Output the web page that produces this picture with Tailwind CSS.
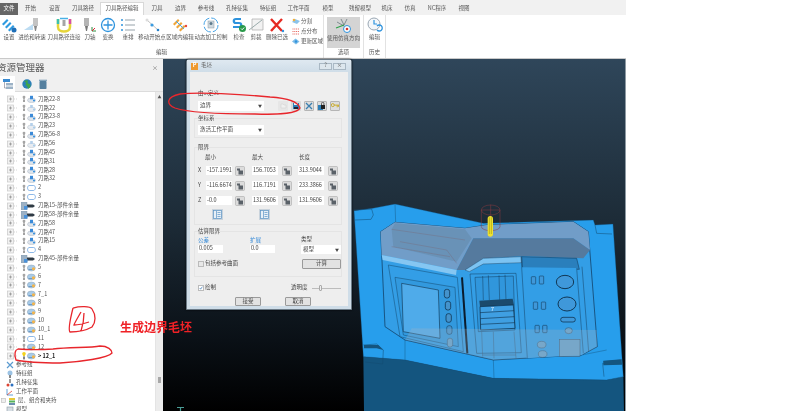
<!DOCTYPE html>
<html lang="zh">
<head>
<meta charset="utf-8">
<title>毛坯</title>
<script src="https://cdn.jsdelivr.net/npm/@tailwindcss/browser@4"></script>
</head>
<body class="bg-white">
<svg class="hidden" width="0" height="0">
  <symbol id="p" viewBox="0 0 10 8"><rect x="0.5" y="1" width="6" height="6" fill="#f2f2f2" stroke="#c8c8c8" stroke-width="0.7"/><path d="M2 4h3M3.5 2.500v3" stroke="#8a8a8a" stroke-width="0.7"/><path d="M7 4h3" stroke="#c4c4c4" stroke-width="0.7" stroke-dasharray="1 1"/></symbol>
  <symbol id="b" viewBox="0 0 6 8"><path d="M1.600 2a1.400 1.300 0 1 1 2.800 0c0 .8-.6 1-.7 2H2.300C2.200 3 1.600 2.800 1.600 2z" fill="#a5a5a5"/><rect x="2.400" y="4.400" width="1.200" height="2.600" fill="#666"/></symbol>
  <symbol id="y" viewBox="0 0 6 8"><path d="M1.200 1.500a1.800 1.500 0 1 1 3.600 0c0 1-.8 1.200-.9 2.500H2.100C2 2.700 1.200 2.500 1.200 1.500z" fill="#f2d21f"/><rect x="2.200" y="4.400" width="1.600" height="3" fill="#666"/></symbol>
  <symbol id="t" viewBox="0 0 9 8"><ellipse cx="4.500" cy="5.300" rx="4" ry="2.300" fill="#dfe5ec" stroke="#aab5c2" stroke-width="0.5"/><path d="M3 .8h3v3.500H3z" fill="#3b8ad8"/><circle cx="7" cy="5.500" r="1" fill="#2a8ce0"/></symbol>
  <symbol id="l" viewBox="0 0 9 8"><ellipse cx="4.500" cy="5.300" rx="4" ry="2.300" fill="#e8ecf1" stroke="#b5c0cb" stroke-width="0.5"/><path d="M3.200 1h2.600v3H3.200z" fill="#b4d0ea"/><circle cx="7" cy="5.500" r=".9" fill="#9cc7ea"/></symbol>
  <symbol id="r" viewBox="0 0 9 8"><path d="M2 1.500h4.500c2.500 0 2.500 4.500 0 5H2.500C0 6.500 0 2 2 1.500z" fill="#fff" stroke="#5a9ade" stroke-width="0.700"/></symbol>
  <symbol id="o" viewBox="0 0 9 8"><ellipse cx="4.300" cy="4" rx="4" ry="3" fill="#a8cbe8" stroke="#8fa5b8" stroke-width="0.5"/><path d="M1.500 5.500h6" stroke="#6b9ac8" stroke-width="1"/><circle cx="6.500" cy="4.800" r="1.600" fill="#f3b54d"/></symbol>
  <symbol id="s" viewBox="0 0 15 8"><rect x="0" y="0" width="6" height="8" fill="#9db2c6" stroke="#7b8fa2" stroke-width="0.4"/><path d="M6 2.500h6l2 1.500-2 1.500H6z" fill="#2e3a44"/><rect x="3" y="4" width="3.500" height="3.500" fill="#4a92da"/></symbol>
  <symbol id="m" viewBox="0 0 10 10"><rect x="0.500" y="0.500" width="9" height="9" rx="1" fill="#dcdcdc" stroke="#a8a8a8" stroke-width=".6"/><path d="M2 2.500h3v2h3v4H3.500V4.500H2z" fill="#5a6168"/></symbol>
</svg>

<div class="flex h-[411px] w-[800px] overflow-hidden bg-white font-['Noto_Sans_CJK_SC',sans-serif] text-[5.5px] leading-none text-[#444] blur-[0.3px]">
  <div class="flex h-full w-[626px] flex-col">

    <!-- tabs -->
    <div class="flex h-[15px] shrink-0 items-end bg-[#f1f1f1] text-[#555]">
      <div class="flex h-[12px] w-[18px] items-center justify-center bg-[#666] text-white">文件</div>
      <div class="flex h-[15px] w-[25px] items-center justify-center pt-[2px]">开始</div>
      <div class="flex h-[15px] w-[23px] items-center justify-center pt-[2px]">设置</div>
      <div class="flex h-[15px] w-[34px] items-center justify-center pt-[2px]">刀具路径</div>
      <div class="flex h-[13px] w-[44px] items-center justify-center border-x border-t border-[#d8d8d8] bg-white">刀具路径编辑</div>
      <div class="flex h-[15px] w-[26px] items-center justify-center pt-[2px]">刀具</div>
      <div class="flex h-[15px] w-[21px] items-center justify-center pt-[2px]">边界</div>
      <div class="flex h-[15px] w-[30px] items-center justify-center pt-[2px]">参考线</div>
      <div class="flex h-[15px] w-[32px] items-center justify-center pt-[2px]">孔特征集</div>
      <div class="flex h-[15px] w-[30px] items-center justify-center pt-[2px]">特征组</div>
      <div class="flex h-[15px] w-[31px] items-center justify-center pt-[2px]">工作平面</div>
      <div class="flex h-[15px] w-[28px] items-center justify-center pt-[2px]">模型</div>
      <div class="flex h-[15px] w-[36px] items-center justify-center pt-[2px]">残留模型</div>
      <div class="flex h-[15px] w-[18px] items-center justify-center pt-[2px]">机床</div>
      <div class="flex h-[15px] w-[28px] items-center justify-center pt-[2px]">仿真</div>
      <div class="flex h-[15px] w-[26px] items-center justify-center pt-[2px]">NC程序</div>
      <div class="flex h-[15px] w-[28px] items-center justify-center pt-[2px]">视图</div>
    </div>

    <!-- ribbon -->
    <div class="flex h-[44px] shrink-0 border-b border-[#c9c9c9] bg-white text-[#555]">
      <div class="flex w-[324px] flex-col border-r border-[#e2e2e2]">
        <div class="flex h-[33px]">
          <div class="flex w-[18px] flex-col items-center gap-[2px] whitespace-nowrap pt-[2px]">
            <svg class="h-[16px] w-[16px]" viewBox="0 0 16 16"><path d="M1 7l5-5 1.500 1.500-5 5zM4 10l5-5 1.500 1.500-5 5zM7 13l5-5 1.500 1.500-5 5z" fill="#2e9ae0"/><circle cx="13" cy="13" r="2.500" fill="#1f6fb8"/></svg>
            <span>设置</span>
          </div>
          <div class="flex w-[28px] flex-col items-center gap-[2px] whitespace-nowrap pt-[2px]">
            <svg class="h-[16px] w-[18px]" viewBox="0 0 18 16"><path d="M1 13l9-6v6z" fill="#bcdcf2"/><rect x="10" y="1" width="5" height="8" fill="#c4c4c4"/><path d="M11 9h3l-1 5h-1z" fill="#888"/></svg>
            <span>进给和转速</span>
          </div>
          <div class="flex w-[36px] flex-col items-center gap-[2px] whitespace-nowrap pt-[2px]">
            <svg class="h-[16px] w-[18px]" viewBox="0 0 18 16"><path d="M3 2v8c0 6 12 6 12 0V2" fill="none" stroke="#e6d53a" stroke-width="2.500"/><path d="M3 2v5" stroke="#3cc0b0" stroke-width="2.500"/><path d="M15 2v5" stroke="#d54fa6" stroke-width="2.500"/><path d="M5 1.500h8" stroke="#49b0e6" stroke-width="1.500"/><rect x="7.500" y="3" width="3" height="6" fill="#a5a5a5"/></svg>
            <span>刀具路径连接</span>
          </div>
          <div class="flex w-[16px] flex-col items-center gap-[2px] whitespace-nowrap pt-[2px]">
            <svg class="h-[16px] w-[16px]" viewBox="0 0 16 16"><rect x="2" y="1" width="5" height="8" fill="#b5b5b5"/><path d="M3 9h3l-1 5H4z" fill="#777"/><path d="M10 14v-4M10 14h4" stroke="#2b8c3f" stroke-width="1"/><path d="M10 14l3-3" stroke="#d23" stroke-width="1"/></svg>
            <span>刀轴</span>
          </div>
          <div class="flex w-[20px] flex-col items-center gap-[2px] whitespace-nowrap pt-[2px]">
            <svg class="h-[16px] w-[16px]" viewBox="0 0 16 16"><circle cx="8" cy="8" r="6.500" fill="none" stroke="#2e93dd" stroke-width="1.300"/><path d="M8 3.500v9M3.500 8h9" stroke="#2e93dd" stroke-width="1.300"/></svg>
            <span>变换</span>
          </div>
          <div class="flex w-[20px] flex-col items-center gap-[2px] whitespace-nowrap pt-[2px]">
            <svg class="h-[16px] w-[16px]" viewBox="0 0 16 16"><path d="M5 3h10M5 8h10M5 13h10" stroke="#7c8a96" stroke-width=".8"/><circle cx="2" cy="3" r="1" fill="#2e93dd"/><circle cx="2" cy="8" r="1" fill="#2e93dd"/><circle cx="2" cy="13" r="1" fill="#2e93dd"/></svg>
            <span>重排</span>
          </div>
          <div class="flex w-[28px] flex-col items-center gap-[2px] whitespace-nowrap pt-[2px]">
            <svg class="h-[16px] w-[16px]" viewBox="0 0 16 16"><path d="M3 3l11 10" stroke="#c0c0c0" stroke-width="1"/><circle cx="3" cy="3" r="1.500" fill="#dcdcdc"/><circle cx="8" cy="8" r="1.600" fill="#3a9be0"/><circle cx="14" cy="13" r="1.300" fill="#2680c8"/></svg>
            <span>移动开始点</span>
          </div>
          <div class="flex w-[28px] flex-col items-center gap-[2px] whitespace-nowrap pt-[2px]">
            <svg class="h-[16px] w-[16px]" viewBox="0 0 16 16"><path d="M1 7l5-5 1.500 1.500-5 5zM4 10l5-5 1.500 1.500-5 5zM7 13l5-5 1.500 1.500-5 5z" fill="#f0a63a"/><path d="M4 4l8 8" stroke="#49a9e4" stroke-width="1"/><circle cx="14" cy="9" r="1.200" fill="#e8483f"/></svg>
            <span>区域内编辑</span>
          </div>
          <div class="flex w-[34px] flex-col items-center gap-[2px] whitespace-nowrap pt-[2px]">
            <svg class="h-[16px] w-[16px]" viewBox="0 0 16 16"><circle cx="8" cy="8" r="7" fill="none" stroke="#48a4e6" stroke-width="1" stroke-dasharray="9 2"/><rect x="5" y="4" width="6" height="7" fill="#cfd9df" stroke="#8b9aa5" stroke-width=".5"/><circle cx="8" cy="6.500" r="1.500" fill="#5d7a8c"/></svg>
            <span>动态加工控制</span>
          </div>
          <div class="flex w-[22px] flex-col items-center gap-[2px] whitespace-nowrap pt-[2px]">
            <svg class="h-[16px] w-[16px]" viewBox="0 0 16 16"><path d="M10 2H5C2 2 2 6 5 6h3c3 0 3 4 0 4H2" fill="none" stroke="#2e93dd" stroke-width="2.200"/><circle cx="11.500" cy="11.500" r="3.500" fill="#2a9a4a"/><path d="M10 11.500l1.200 1.200 2-2.200" fill="none" stroke="#fff" stroke-width="1"/></svg>
            <span>检查</span>
          </div>
          <div class="flex w-[12px] flex-col items-center gap-[2px] whitespace-nowrap pt-[2px]">
            <svg class="h-[16px] w-[16px] shrink-0" viewBox="0 0 16 16"><path d="M4 2l11 0 0 11-11 0z" fill="#f2f2f2" stroke="#aaa" stroke-width=".7"/><path d="M1 13L14 3" stroke="#9aa" stroke-width="1"/></svg>
            <span>剪裁</span>
          </div>
          <div class="flex w-[30px] flex-col items-center gap-[2px] whitespace-nowrap pt-[2px]">
            <svg class="h-[16px] w-[16px]" viewBox="0 0 16 16"><path d="M2 2l11 12M13 2L2 14" stroke="#e62a22" stroke-width="2.400"/><circle cx="14" cy="14" r="1.200" fill="#2e93dd"/></svg>
            <span>删除已选</span>
          </div>
          <div class="flex flex-col gap-[3px] whitespace-nowrap pt-[3px]">
            <div class="flex h-[7px] items-center gap-[1px]"><svg class="h-[7px] w-[8px]" viewBox="0 0 8 7"><path d="M0 4l3-3 5 2-3 3z" fill="#8cc3ea"/><circle cx="2" cy="2" r="1.300" fill="#f0b040"/></svg><span>分割</span></div>
            <div class="flex h-[7px] items-center gap-[1px]"><svg class="h-[7px] w-[8px]" viewBox="0 0 8 7"><path d="M.5 1h7M.5 3.500h7M.5 6h7" stroke="#e03a30" stroke-width=".8" stroke-dasharray="1 .8"/></svg><span>点分布</span></div>
            <div class="flex h-[7px] items-center gap-[1px]"><svg class="h-[7px] w-[8px]" viewBox="0 0 8 7"><path d="M0 3.500l3.500-3 4 3-3.500 3z" fill="#7fbde8"/><circle cx="4" cy="3.500" r="1.200" fill="#2e93dd"/></svg><span>更新区域</span></div>
          </div>
        </div>
        <div class="flex h-[10px] items-center justify-center">编辑</div>
      </div>

      <div class="flex w-[40px] flex-col border-r border-[#e2e2e2]">
        <div class="mx-[3px] mt-[2px] flex h-[31px] flex-col items-center gap-[2px] whitespace-nowrap bg-[#d4d4d4] pt-[1px]">
          <svg class="h-[16px] w-[20px]" viewBox="0 0 20 16"><path d="M7 1l3 6M13 1l-3 6M3 4l7 4" stroke="#6b7a80" stroke-width=".8"/><path d="M2 10l8-3" stroke="#2ca14a" stroke-width="1.200"/><circle cx="13" cy="11" r="3.500" fill="#fff" stroke="#2e93dd" stroke-width="1"/><circle cx="13" cy="11" r="1.300" fill="#d8362c"/></svg>
          <span>使用仿真方向</span>
        </div>
        <div class="flex h-[10px] items-center justify-center">选项</div>
      </div>

      <div class="flex w-[22px] flex-col border-r border-[#e2e2e2]">
        <div class="flex h-[33px] flex-col items-center gap-[2px] whitespace-nowrap pt-[2px]">
          <svg class="h-[16px] w-[16px]" viewBox="0 0 16 16"><circle cx="7" cy="7" r="6" fill="#f4f7fa" stroke="#9aa7b3" stroke-width="1"/><path d="M7 3v4h3" stroke="#2e93dd" stroke-width="1.200" fill="none"/><path d="M10 13a3 3 0 1 0 0-4" fill="none" stroke="#2e93dd" stroke-width="1.300"/></svg>
          <span>编辑</span>
        </div>
        <div class="flex h-[10px] items-center justify-center">历史</div>
      </div>
    </div>

    <!-- main -->
    <div class="flex min-h-0 flex-1">
      <!-- explorer -->
      <div class="flex w-[163px] shrink-0 flex-col bg-[#f0f0f0]">
        <div class="flex h-[17px] shrink-0 items-center justify-between overflow-hidden pr-[5px] text-[9.500px] text-[#555]">
          <span class="-ml-[3px] whitespace-nowrap">资源管理器</span>
          <span class="text-[6px] text-[#777]">×</span>
        </div>
        <div class="flex h-[16px] shrink-0 items-center gap-[7px] border-b border-[#dcdcdc]">
          <div class="flex h-[16px] w-[15px] items-center justify-center bg-white">
            <svg class="h-[10px] w-[10px]" viewBox="0 0 10 10"><rect x="0" y="0" width="7" height="3" fill="#3a8ad0"/><rect x="3" y="4" width="7" height="2.500" fill="#9cb2c6"/><rect x="3" y="7.500" width="7" height="2.500" fill="#9cb2c6"/><path d="M1.500 3v6H3" fill="none" stroke="#778" stroke-width=".6"/></svg>
          </div>
          <svg class="h-[10px] w-[10px]" viewBox="0 0 10 10"><circle cx="5" cy="5" r="4.700" fill="#2b7fb8"/><path d="M2 2c2 1 3 3 1 4 2 0 3 3 3 4 2-1 3-3 2-5-2 0-3-1-2-4z" fill="#3fa34d"/></svg>
          <svg class="h-[10px] w-[8px]" viewBox="0 0 8 10"><rect x=".5" y="2" width="7" height="8" rx=".8" fill="#55809f"/><rect x="0" y=".7" width="8" height="1.200" fill="#7da0b8"/></svg>
        </div>
        <div class="flex min-h-0 flex-1">
          <div class="w-[155px] shrink-0 overflow-hidden bg-white pt-[3px] text-[#505050]">
            <div class="flex h-[8.870px] items-center whitespace-nowrap"><svg class="ml-[7px] h-[8px] w-[10px]"><use href="#p"/></svg><svg class="ml-[4px] h-[8px] w-[6px]"><use href="#b"/></svg><svg class="h-[8px] w-[9px]"><use href="#t"/></svg><span class="ml-[2px]">刀路22-8</span></div>
            <div class="flex h-[8.870px] items-center whitespace-nowrap"><svg class="ml-[7px] h-[8px] w-[10px]"><use href="#p"/></svg><svg class="ml-[4px] h-[8px] w-[6px]"><use href="#b"/></svg><svg class="h-[8px] w-[9px]"><use href="#l"/></svg><span class="ml-[2px]">刀路22</span></div>
            <div class="flex h-[8.870px] items-center whitespace-nowrap"><svg class="ml-[7px] h-[8px] w-[10px]"><use href="#p"/></svg><svg class="ml-[4px] h-[8px] w-[6px]"><use href="#b"/></svg><svg class="h-[8px] w-[9px]"><use href="#t"/></svg><span class="ml-[2px]">刀路23-8</span></div>
            <div class="flex h-[8.870px] items-center whitespace-nowrap"><svg class="ml-[7px] h-[8px] w-[10px]"><use href="#p"/></svg><svg class="ml-[4px] h-[8px] w-[6px]"><use href="#b"/></svg><svg class="h-[8px] w-[9px]"><use href="#l"/></svg><span class="ml-[2px]">刀路23</span></div>
            <div class="flex h-[8.870px] items-center whitespace-nowrap"><svg class="ml-[7px] h-[8px] w-[10px]"><use href="#p"/></svg><svg class="ml-[4px] h-[8px] w-[6px]"><use href="#b"/></svg><svg class="h-[8px] w-[9px]"><use href="#t"/></svg><span class="ml-[2px]">刀路56-8</span></div>
            <div class="flex h-[8.870px] items-center whitespace-nowrap"><svg class="ml-[7px] h-[8px] w-[10px]"><use href="#p"/></svg><svg class="ml-[4px] h-[8px] w-[6px]"><use href="#b"/></svg><svg class="h-[8px] w-[9px]"><use href="#l"/></svg><span class="ml-[2px]">刀路56</span></div>
            <div class="flex h-[8.870px] items-center whitespace-nowrap"><svg class="ml-[7px] h-[8px] w-[10px]"><use href="#p"/></svg><svg class="ml-[4px] h-[8px] w-[6px]"><use href="#b"/></svg><svg class="h-[8px] w-[9px]"><use href="#t"/></svg><span class="ml-[2px]">刀路45</span></div>
            <div class="flex h-[8.870px] items-center whitespace-nowrap"><svg class="ml-[7px] h-[8px] w-[10px]"><use href="#p"/></svg><svg class="ml-[4px] h-[8px] w-[6px]"><use href="#b"/></svg><svg class="h-[8px] w-[9px]"><use href="#t"/></svg><span class="ml-[2px]">刀路31</span></div>
            <div class="flex h-[8.870px] items-center whitespace-nowrap"><svg class="ml-[7px] h-[8px] w-[10px]"><use href="#p"/></svg><svg class="ml-[4px] h-[8px] w-[6px]"><use href="#b"/></svg><svg class="h-[8px] w-[9px]"><use href="#t"/></svg><span class="ml-[2px]">刀路28</span></div>
            <div class="flex h-[8.870px] items-center whitespace-nowrap"><svg class="ml-[7px] h-[8px] w-[10px]"><use href="#p"/></svg><svg class="ml-[4px] h-[8px] w-[6px]"><use href="#b"/></svg><svg class="h-[8px] w-[9px]"><use href="#t"/></svg><span class="ml-[2px]">刀路32</span></div>
            <div class="flex h-[8.870px] items-center whitespace-nowrap"><svg class="ml-[7px] h-[8px] w-[10px]"><use href="#p"/></svg><svg class="ml-[4px] h-[8px] w-[6px]"><use href="#b"/></svg><svg class="h-[8px] w-[9px]"><use href="#r"/></svg><span class="ml-[2px]">2</span></div>
            <div class="flex h-[8.870px] items-center whitespace-nowrap"><svg class="ml-[7px] h-[8px] w-[10px]"><use href="#p"/></svg><svg class="ml-[4px] h-[8px] w-[6px]"><use href="#b"/></svg><svg class="h-[8px] w-[9px]"><use href="#r"/></svg><span class="ml-[2px]">3</span></div>
            <div class="flex h-[8.870px] items-center whitespace-nowrap"><svg class="ml-[7px] h-[8px] w-[10px]"><use href="#p"/></svg><svg class="ml-[4px] h-[8px] w-[15px]"><use href="#s"/></svg><span class="ml-[2px]">刀路15-部件余量</span></div>
            <div class="flex h-[8.870px] items-center whitespace-nowrap"><svg class="ml-[7px] h-[8px] w-[10px]"><use href="#p"/></svg><svg class="ml-[4px] h-[8px] w-[15px]"><use href="#s"/></svg><span class="ml-[2px]">刀路58-部件余量</span></div>
            <div class="flex h-[8.870px] items-center whitespace-nowrap"><svg class="ml-[7px] h-[8px] w-[10px]"><use href="#p"/></svg><svg class="ml-[4px] h-[8px] w-[6px]"><use href="#b"/></svg><svg class="h-[8px] w-[9px]"><use href="#t"/></svg><span class="ml-[2px]">刀路58</span></div>
            <div class="flex h-[8.870px] items-center whitespace-nowrap"><svg class="ml-[7px] h-[8px] w-[10px]"><use href="#p"/></svg><svg class="ml-[4px] h-[8px] w-[6px]"><use href="#b"/></svg><svg class="h-[8px] w-[9px]"><use href="#t"/></svg><span class="ml-[2px]">刀路47</span></div>
            <div class="flex h-[8.870px] items-center whitespace-nowrap"><svg class="ml-[7px] h-[8px] w-[10px]"><use href="#p"/></svg><svg class="ml-[4px] h-[8px] w-[6px]"><use href="#b"/></svg><svg class="h-[8px] w-[9px]"><use href="#t"/></svg><span class="ml-[2px]">刀路15</span></div>
            <div class="flex h-[8.870px] items-center whitespace-nowrap"><svg class="ml-[7px] h-[8px] w-[10px]"><use href="#p"/></svg><svg class="ml-[4px] h-[8px] w-[6px]"><use href="#b"/></svg><svg class="h-[8px] w-[9px]"><use href="#r"/></svg><span class="ml-[2px]">4</span></div>
            <div class="flex h-[8.870px] items-center whitespace-nowrap"><svg class="ml-[7px] h-[8px] w-[10px]"><use href="#p"/></svg><svg class="ml-[4px] h-[8px] w-[15px]"><use href="#s"/></svg><span class="ml-[2px]">刀路45-部件余量</span></div>
            <div class="flex h-[8.870px] items-center whitespace-nowrap"><svg class="ml-[7px] h-[8px] w-[10px]"><use href="#p"/></svg><svg class="ml-[4px] h-[8px] w-[6px]"><use href="#b"/></svg><svg class="h-[8px] w-[9px]"><use href="#o"/></svg><span class="ml-[2px]">5</span></div>
            <div class="flex h-[8.870px] items-center whitespace-nowrap"><svg class="ml-[7px] h-[8px] w-[10px]"><use href="#p"/></svg><svg class="ml-[4px] h-[8px] w-[6px]"><use href="#b"/></svg><svg class="h-[8px] w-[9px]"><use href="#o"/></svg><span class="ml-[2px]">6</span></div>
            <div class="flex h-[8.870px] items-center whitespace-nowrap"><svg class="ml-[7px] h-[8px] w-[10px]"><use href="#p"/></svg><svg class="ml-[4px] h-[8px] w-[6px]"><use href="#b"/></svg><svg class="h-[8px] w-[9px]"><use href="#o"/></svg><span class="ml-[2px]">7</span></div>
            <div class="flex h-[8.870px] items-center whitespace-nowrap"><svg class="ml-[7px] h-[8px] w-[10px]"><use href="#p"/></svg><svg class="ml-[4px] h-[8px] w-[6px]"><use href="#b"/></svg><svg class="h-[8px] w-[9px]"><use href="#o"/></svg><span class="ml-[2px]">7_1</span></div>
            <div class="flex h-[8.870px] items-center whitespace-nowrap"><svg class="ml-[7px] h-[8px] w-[10px]"><use href="#p"/></svg><svg class="ml-[4px] h-[8px] w-[6px]"><use href="#b"/></svg><svg class="h-[8px] w-[9px]"><use href="#o"/></svg><span class="ml-[2px]">8</span></div>
            <div class="flex h-[8.870px] items-center whitespace-nowrap"><svg class="ml-[7px] h-[8px] w-[10px]"><use href="#p"/></svg><svg class="ml-[4px] h-[8px] w-[6px]"><use href="#b"/></svg><svg class="h-[8px] w-[9px]"><use href="#o"/></svg><span class="ml-[2px]">9</span></div>
            <div class="flex h-[8.870px] items-center whitespace-nowrap"><svg class="ml-[7px] h-[8px] w-[10px]"><use href="#p"/></svg><svg class="ml-[4px] h-[8px] w-[6px]"><use href="#b"/></svg><svg class="h-[8px] w-[9px]"><use href="#o"/></svg><span class="ml-[2px]">10</span></div>
            <div class="flex h-[8.870px] items-center whitespace-nowrap"><svg class="ml-[7px] h-[8px] w-[10px]"><use href="#p"/></svg><svg class="ml-[4px] h-[8px] w-[6px]"><use href="#b"/></svg><svg class="h-[8px] w-[9px]"><use href="#o"/></svg><span class="ml-[2px]">10_1</span></div>
            <div class="flex h-[8.870px] items-center whitespace-nowrap"><svg class="ml-[7px] h-[8px] w-[10px]"><use href="#p"/></svg><svg class="ml-[4px] h-[8px] w-[6px]"><use href="#b"/></svg><svg class="h-[8px] w-[9px]"><use href="#r"/></svg><span class="ml-[2px]">11</span></div>
            <div class="flex h-[8.870px] items-center whitespace-nowrap"><svg class="ml-[7px] h-[8px] w-[10px]"><use href="#p"/></svg><svg class="ml-[4px] h-[8px] w-[6px]"><use href="#b"/></svg><svg class="h-[8px] w-[9px]"><use href="#o"/></svg><span class="ml-[2px]">12</span></div>
            <div class="flex h-[8.870px] items-center whitespace-nowrap"><svg class="ml-[7px] h-[8px] w-[10px]"><use href="#p"/></svg><svg class="ml-[4px] h-[8px] w-[6px]"><use href="#y"/></svg><svg class="h-[8px] w-[9px]"><use href="#o"/></svg><span class="ml-[2px] font-bold text-[#222]">&gt; 12_1</span></div>
            <div class="flex h-[8.870px] items-center gap-[2px] whitespace-nowrap pl-[6px]"><svg class="h-[8px] w-[8px]" viewBox="0 0 8 8"><path d="M1 1l6 6M7 1L1 7" stroke="#5b9bd0" stroke-width="1.200"/></svg><span>参考线</span></div>
            <div class="flex h-[8.870px] items-center gap-[2px] whitespace-nowrap pl-[6px]"><svg class="h-[8px] w-[8px]" viewBox="0 0 8 8"><circle cx="4" cy="3" r="2.500" fill="#9cc3e4"/><rect x="3" y="5" width="2" height="3" fill="#888"/></svg><span>特征组</span></div>
            <div class="flex h-[8.870px] items-center gap-[2px] whitespace-nowrap pl-[6px]"><svg class="h-[8px] w-[8px]" viewBox="0 0 8 8"><path d="M3 0h2v4H3z" fill="#999"/><circle cx="2" cy="6" r="1.500" fill="#d43"/><circle cx="6" cy="6" r="1.500" fill="#2a6fc0"/></svg><span>孔特征集</span></div>
            <div class="flex h-[8.870px] items-center gap-[2px] whitespace-nowrap pl-[6px]"><svg class="h-[8px] w-[8px]" viewBox="0 0 8 8"><path d="M1 1v6h6" fill="none" stroke="#3a8ad0" stroke-width=".8"/><path d="M1 7l5-4" stroke="#d43" stroke-width=".8"/></svg><span>工作平面</span></div>
            <div class="flex h-[8.870px] items-center gap-[2px] whitespace-nowrap pl-[1px]"><svg class="h-[8px] w-[5px]" viewBox="0 0 5 8"><rect x=".5" y="1.500" width="4" height="4" fill="#eee" stroke="#bbb" stroke-width=".6"/></svg><svg class="h-[8px] w-[8px]" viewBox="0 0 8 8"><rect x="1" y="1" width="6" height="2" fill="#e7c93a"/><rect x="1" y="3.500" width="6" height="2" fill="#58b45a"/><rect x="1" y="6" width="6" height="2" fill="#6d8fb0"/></svg><span>层、组合和夹持</span></div>
            <div class="flex h-[8.870px] items-center gap-[2px] whitespace-nowrap pl-[6px]"><svg class="h-[8px] w-[8px]" viewBox="0 0 8 8"><rect x="1" y="1" width="6" height="6" fill="#d6dde3" stroke="#8b9aa5" stroke-width=".6"/></svg><span>模型</span></div>
          </div>
          <div class="flex w-[8px] flex-col items-center border-l border-[#e4e4e4] bg-[#ececec] text-[#555]">
            <span class="mt-[3px] text-[4px]">▲</span>
            <div class="mt-[278px] h-[6px] w-[3px] bg-[#a8a8a8]"></div>
          </div>
        </div>
      </div>

      <!-- viewport -->
      <div class="relative min-w-0 flex-1 border-r border-[#8e9aa3] bg-[linear-gradient(180deg,#2f465a_0%,#1d2c38_45%,#0a1016_80%,#000_100%)]">
        <svg class="absolute left-[187px] top-[131px] h-[221px] w-[276px]" viewBox="0 0 828 663">
          <polygon points="40,500 165,510 430,565 770,570 820,558 822,663 42,663" fill="#14557f"/>
          <polygon points="12,62 68,55 135,42 400,100 730,90 735,105 789,102 820,560 770,570 430,565 165,510 40,500" fill="#279eec" stroke="#124a70" stroke-width="1"/>
          <path d="M12,60 L65,57 L70,75 L63,88 L15,90 M735,105 L740,130 L786,132 M40,465 L80,462 L100,480 L98,522 L45,516 M760,515 L815,510 M762,560 L758,520 L815,520" fill="none" stroke="#124a70" stroke-width="1.500"/>
          <polygon points="42,465 85,465 100,480 80,475 42,475" fill="#14557f"/>
          <polygon points="760,512 815,508 816,524 760,526" fill="#14557f"/>
          <path d="M135,42 L137,97 M165,450 L165,510 M430,510 L432,565 M695,495 L770,480" stroke="#0f3c5c" stroke-width="1"/>
          <polygon points="92,125 135,97 345,115 410,105 670,95 715,125 742,470 695,495 430,510 165,450 105,410" fill="#339ee6" stroke="#0e3050" stroke-width="2"/>
          <polygon points="92,125 135,97 345,115 410,105 670,95 715,125 720,180 670,145 370,145 320,240 95,195" fill="#719dc8"/>
          <polygon points="125,118 135,100 345,118 365,145 320,215 130,170" fill="#648aac" opacity=".6"/>
          <path d="M125,170 L300,200 M150,155 L290,180 L320,220 M125,118 L345,150" stroke="#7a6570" stroke-width="1" fill="none"/>
          <polygon points="370,145 670,145 720,180 700,205 515,198 400,205 345,240 320,240" fill="#557a9e"/>
          <polygon points="345,240 400,205 515,200 515,218 400,222 358,245" fill="#7cc3f2" stroke="#123" stroke-width="1"/>
          <polygon points="95,195 320,240 318,255 98,210" fill="#85c6f2"/>
          <polygon points="115,225 322,262 340,485 150,440" fill="#339ee6" stroke="#0e3a5c" stroke-width="1.300"/>
          <polygon points="135,262 315,292 325,470 160,435" fill="#3299de" stroke="#0e3a5c" stroke-width="1.300"/>
          <polygon points="155,280 265,300 270,445 160,425" fill="#4fabea" stroke="#0d2f4a" stroke-width="1.800"/>
          <rect x="283" y="298" width="16" height="26" rx="7" fill="#4493cc" stroke="#0d2f4a" stroke-width="2.200"/>
          <rect x="286" y="334" width="16" height="26" rx="7" fill="#4493cc" stroke="#0d2f4a" stroke-width="2.200"/>
          <rect x="288" y="371" width="16" height="26" rx="7" fill="#4493cc" stroke="#0d2f4a" stroke-width="2.200"/>
          <rect x="290" y="407" width="16" height="26" rx="7" fill="#4493cc" stroke="#0d2f4a" stroke-width="1.500"/>
          <rect x="292" y="445" width="16" height="26" rx="7" fill="#66a3cc" stroke="#33506a" stroke-width="1.500"/>
          <path d="M336,262 L352,490" stroke="#0b1c2c" stroke-width="6"/>
          <polygon points="360,252 498,250 514,488 380,490" fill="#339ee6" stroke="#0d2f4a" stroke-width="1.300"/>
          <polygon points="375,262 490,258 495,420 385,425" fill="#3096dc" stroke="#0d2f4a" stroke-width="1.300"/>
          <path d="M398,258 L400,330 M415,256 L418,330 M447,256 L449,330 M465,254 L468,330" stroke="#0d2f4a" stroke-width="1.300"/>
          <polygon points="388,332 488,326 492,345 390,350" fill="#1b4a6c"/>
          <polygon points="390,350 490,345 495,415 392,420" fill="#3f9fe2" stroke="#0d2f4a" stroke-width="2.200"/>
          <path d="M390,368 L492,362 M391,386 L493,380 M392,403 L494,398" stroke="#0d2f4a" stroke-width="1.800"/>
          <text x="422" y="362" fill="#dfefff" font-size="18" font-family="Liberation Sans">7</text>
          <polygon points="515,200 680,205 688,238 518,236" fill="#2a7fbc" stroke="#0d2f4a" stroke-width="1.500"/>
          <polygon points="515,232 680,234 735,470 695,495 530,505" fill="#339ee6"/>
          <path d="M513,200 L532,505 M680,235 L700,490 M696,230 L716,485" stroke="#0d2f4a" stroke-width="1.300"/>
          <ellipse cx="645" cy="276" rx="26" ry="20" fill="#3f98da" stroke="#0d2f4a" stroke-width="2.800"/>
          <ellipse cx="651" cy="342" rx="27" ry="21" fill="#3f98da" stroke="#0d2f4a" stroke-width="2.800"/>
          <rect x="544" y="260" width="13" height="22" rx="2" fill="#3f98da" stroke="#0d2f4a" stroke-width="1.500"/>
          <rect x="568" y="258" width="13" height="24" rx="2" fill="#3f98da" stroke="#0d2f4a" stroke-width="1.500"/>
          <rect x="550" y="336" width="13" height="22" rx="2" fill="#3f98da" stroke="#0d2f4a" stroke-width="1.500"/>
          <rect x="574" y="336" width="13" height="22" rx="2" fill="#3f98da" stroke="#0d2f4a" stroke-width="1.500"/>
          <rect x="632" y="382" width="44" height="14" rx="7" fill="#3f98da" stroke="#0d2f4a" stroke-width="2.200"/>
          <rect x="555" y="406" width="13" height="22" rx="2" fill="#3f98da" stroke="#0d2f4a" stroke-width="1.500"/>
          <rect x="578" y="406" width="13" height="22" rx="2" fill="#3f98da" stroke="#0d2f4a" stroke-width="1.500"/>
          <ellipse cx="656" cy="422" rx="11" ry="9" fill="#66a3cc" stroke="#33506a" stroke-width="1.500"/>
          <ellipse cx="575" cy="464" rx="13" ry="10" fill="#66a3cc" stroke="#33506a" stroke-width="1.500"/>
          <ellipse cx="578" cy="492" rx="13" ry="10" fill="#66a3cc" stroke="#33506a" stroke-width="1.500"/>
          <rect x="628" y="448" width="62" height="52" fill="#66a3cc" stroke="#33506a" stroke-width="1.500"/>
          <path d="M395,425 L398,500 M430,425 L432,505 M492,425 L498,505 M398,495 L498,495" stroke="#33506a" stroke-width="1.300"/>
          <polygon points="185,415 740,420 742,470 695,495 430,510 165,450" fill="#a7b5c3" opacity=".28"/>
          <ellipse cx="422" cy="60" rx="28" ry="15" fill="none" stroke="#8a3a40" stroke-width="1.500"/>
          <path d="M394,60 L394,110 M450,60 L450,110 M422,44 L422,110 M394,110 A28,12 0 0 0 450,110 M394,60 H450" fill="none" stroke="#8a3a40" stroke-width="1.500"/>
          <rect x="413" y="78" width="16" height="62" rx="8" fill="#efe12f"/>
          <path d="M418,82 L418,132 M424,82 L424,132" stroke="#8a8a10" stroke-width="1.500"/>
        </svg>
        <svg class="absolute bottom-0 left-[14px] h-[4px] w-[7px]" viewBox="0 0 7 4"><path d="M0 .5h7M3.500 .5V4" stroke="#4a9c95" stroke-width="1.200"/></svg>

        <!-- dialog -->
        <div class="absolute left-[23px] top-0 flex h-[251px] w-[166px] flex-col rounded-t-[3px] border border-[#6b7a86] bg-[#cfdde8] shadow-[0_0_2px_#000]">
          <div class="flex h-[12px] shrink-0 items-center bg-[linear-gradient(180deg,#dfe9f1,#cfdde8)] pl-[4px] pr-[5px] text-[#666]">
            <div class="flex h-[7px] w-[7px] items-center justify-center bg-[#ef9a2f] text-[5.500px] font-bold text-white">P</div>
            <span class="ml-[3px]">毛坯</span>
            <div class="ml-auto flex gap-px">
              <div class="flex h-[7px] w-[13px] items-center justify-center border border-[#a9b8c4] bg-[#dde7ee]">?</div>
              <div class="flex h-[7px] w-[13px] items-center justify-center border border-[#a9b8c4] bg-[#dde7ee]">×</div>
            </div>
          </div>
          <div class="mx-[3px] mb-[3px] flex min-h-0 flex-1 flex-col bg-[#eeeeee] pl-[4px] pr-[6px]">
            <div class="ml-[4px] mt-[19px] h-[8px]">由...定义</div>
            <div class="mt-px flex h-[11px] items-center">
              <div class="ml-[4px] flex h-[10px] w-[66px] items-center justify-between bg-white pl-[2px] pr-[2px]"><span>边界</span><span class="text-[4px]">▼</span></div>
              <div class="ml-[14px] flex gap-[3px]">
                <div class="flex h-[10px] w-[10px] items-center justify-center rounded-[1px] bg-[#e6e6e6]"><svg class="h-[7px] w-[7px]" viewBox="0 0 7 7"><path d="M1 2h2l1 1h2v3H1z" fill="#f0f0f0" stroke="#ccc" stroke-width=".5"/></svg></div>
                <div class="flex h-[10px] w-[10px] items-center justify-center rounded-[1px] bg-[#d8d8d8]"><svg class="h-[8px] w-[8px]" viewBox="0 0 8 8"><rect x="1" y="1" width="6" height="6" fill="#2d7fb8"/><rect x="2" y="1" width="4" height="2" fill="#eee"/><rect x="2" y="5" width="4" height="2" fill="#223"/></svg></div>
                <div class="flex h-[10px] w-[10px] items-center justify-center rounded-[1px] border border-[#b5b5b5] bg-[#ddd]"><svg class="h-[8px] w-[8px]" viewBox="0 0 8 8"><path d="M1 1l6 6M7 1L1 7" stroke="#3a7fb0" stroke-width="1.300"/></svg></div>
                <div class="flex h-[10px] w-[10px] items-center justify-center rounded-[1px] border border-[#b5b5b5] bg-[#ddd]"><svg class="h-[8px] w-[8px]" viewBox="0 0 8 8"><rect x="0" y="3" width="5" height="5" fill="#2d7fb8"/><rect x="3" y="3" width="4" height="4" fill="#222"/><path d="M3.500 3V1.500a1.200 1.200 0 0 1 2.400 0V3" fill="none" stroke="#444" stroke-width=".8"/></svg></div>
                <div class="flex h-[10px] w-[10px] items-center justify-center rounded-[1px] border border-[#b5b5b5] bg-[#ddd]"><svg class="h-[8px] w-[9px]" viewBox="0 0 9 8"><circle cx="2" cy="3" r="1.700" fill="none" stroke="#c8a81e" stroke-width="1"/><path d="M3.500 3H9M7 3v2.500M8.500 3v2" stroke="#c8a81e" stroke-width="1"/></svg></div>
              </div>
            </div>

            <div class="mt-[7px] h-[20px] border border-[#e4e4e4] pl-[3px]">
              <div class="-mt-[3px] h-[7px] w-fit bg-[#eeeeee]">坐标系</div>
              <div class="mt-[2px] flex h-[10px] w-[66px] items-center justify-between bg-white pl-[2px] pr-[2px]"><span>激活工作平面</span><span class="text-[4px]">▼</span></div>
            </div>

            <div class="mt-[9px] h-[78px] border border-[#e4e4e4] pl-[3px]">
              <div class="-mt-[3px] h-[7px] w-fit bg-[#eeeeee]">限界</div>
              <div class="mt-[3px] flex h-[7px]"><span class="ml-[7px] w-[47px]">最小</span><span class="w-[47px]">最大</span><span>长度</span></div>
              <div class="mt-[1px] flex h-[15px] items-center"><span class="w-[8px]">X</span><div class="flex h-[9px] w-[26px] items-center overflow-hidden whitespace-nowrap bg-white pl-px">-157.1991</div><svg class="ml-[3px] h-[10px] w-[10px]"><use href="#m"/></svg><div class="ml-[7px] flex h-[9px] w-[26px] items-center bg-white pl-px">156.7053</div><svg class="ml-[4px] h-[10px] w-[10px]"><use href="#m"/></svg><div class="ml-[6px] flex h-[9px] w-[26px] items-center bg-white pl-px">313.9044</div><svg class="ml-[4px] h-[10px] w-[10px]"><use href="#m"/></svg></div>
              <div class="flex h-[15px] items-center"><span class="w-[8px]">Y</span><div class="flex h-[9px] w-[26px] items-center overflow-hidden whitespace-nowrap bg-white pl-px">-116.6674</div><svg class="ml-[3px] h-[10px] w-[10px]"><use href="#m"/></svg><div class="ml-[7px] flex h-[9px] w-[26px] items-center bg-white pl-px">116.7191</div><svg class="ml-[4px] h-[10px] w-[10px]"><use href="#m"/></svg><div class="ml-[6px] flex h-[9px] w-[26px] items-center bg-white pl-px">233.3866</div><svg class="ml-[4px] h-[10px] w-[10px]"><use href="#m"/></svg></div>
              <div class="flex h-[15px] items-center"><span class="w-[8px]">Z</span><div class="flex h-[9px] w-[26px] items-center bg-white pl-px">-0.0</div><svg class="ml-[3px] h-[10px] w-[10px]"><use href="#m"/></svg><div class="ml-[7px] flex h-[9px] w-[26px] items-center bg-white pl-px">131.9606</div><svg class="ml-[4px] h-[10px] w-[10px]"><use href="#m"/></svg><div class="ml-[6px] flex h-[9px] w-[26px] items-center bg-white pl-px">131.9606</div><svg class="ml-[4px] h-[10px] w-[10px]"><use href="#m"/></svg></div>
              <div class="mt-px flex gap-[36px] pl-[14px]">
                <div class="flex h-[11px] w-[11px] items-center justify-center bg-[#c9d3dc]"><svg class="h-[9px] w-[9px]" viewBox="0 0 9 9"><rect x=".5" y=".5" width="8" height="8" fill="#e8f0f7" stroke="#5b93c4" stroke-width=".7"/><path d="M3.500 1v7M4.500 2.500h3M4.500 4.500h3M4.500 6.500h3" stroke="#5b93c4" stroke-width=".7"/></svg></div>
                <div class="flex h-[11px] w-[11px] items-center justify-center bg-[#c9d3dc]"><svg class="h-[9px] w-[9px]" viewBox="0 0 9 9"><rect x=".5" y=".5" width="8" height="8" fill="#e8f0f7" stroke="#5b93c4" stroke-width=".7"/><path d="M3.500 1v7M4.500 2.500h3M4.500 4.500h3M4.500 6.500h3" stroke="#5b93c4" stroke-width=".7"/></svg></div>
              </div>
            </div>

            <div class="mt-[6px] h-[46px] border border-[#e4e4e4] pl-[3px]">
              <div class="-mt-[3px] h-[7px] w-fit bg-[#eeeeee]">估算限界</div>
              <div class="mt-[2px] flex">
                <div class="w-[52px]"><div class="h-[7px] text-[#2f86d6]">公差</div><div class="flex h-[8px] w-[25px] items-center bg-white pl-px">0.005</div></div>
                <div class="w-[51px]"><div class="h-[7px] text-[#2f86d6]">扩展</div><div class="flex h-[8px] w-[25px] items-center bg-white pl-px">0.0</div></div>
                <div class="-mt-px"><div class="h-[7px]">类型</div><div class="mt-px flex h-[9px] w-[40px] items-center justify-between bg-white pl-[2px] pr-[2px]"><span>模型</span><span class="text-[4px]">▼</span></div></div>
              </div>
              <div class="mt-[5px] flex items-center">
                <div class="h-[6px] w-[6px] border border-[#bbb] bg-[#e8e8e8]"></div>
                <span class="ml-[1px] w-[97px]">包括参考曲面</span>
                <div class="flex h-[10px] w-[39px] items-center justify-center rounded-[1px] border border-[#9a9a9a] bg-[#e2e2e2]">计算</div>
              </div>
            </div>

            <div class="mt-[7px] flex h-[8px] items-center pl-[4px]">
              <svg class="h-[6px] w-[6px] border border-[#bbb] bg-white" viewBox="0 0 6 6"><path d="M1 3l1.500 1.800L5 1" fill="none" stroke="#2f6fb0" stroke-width="1"/></svg>
              <span class="ml-[1px] w-[86px]">绘制</span>
              <span class="w-[21px]">透明度</span>
              <div class="relative flex h-[6px] w-[29px] items-center"><div class="h-px w-full bg-[#bcbcbc]"></div><div class="absolute left-[7px] h-[6px] w-[3px] rounded-[1px] border border-[#aaa] bg-[#eee]"></div></div>
            </div>
            <div class="mt-[5px] flex pl-[41px]">
              <div class="flex h-[9px] w-[26px] items-center justify-center rounded-[1px] border border-[#9a9a9a] bg-[#e2e2e2]">接受</div>
              <div class="ml-[24px] flex h-[9px] w-[26px] items-center justify-center rounded-[1px] border border-[#9a9a9a] bg-[#e2e2e2]">取消</div>
            </div>
          </div>
        </div>
      </div>
    </div>
  </div>

  <!-- hand-drawn annotations -->
  <svg class="pointer-events-none absolute left-0 top-0 h-[411px] w-[800px]" viewBox="0 0 800 411">
    <path d="M180,94 C200,92 240,94 270,97 C285,98 298,101 300,108 C298,113 280,115 255,114 C225,114 190,113 175,108 C166,104 166,97 180,94" fill="none" stroke="#e8262c" stroke-width="1.300"/>
    <path d="M73,308 C80,306 90,306 92,309 C96,315 96,322 92,327 C85,331 76,332 70,332 C68,330 70,320 73,308 M81,312 C77,319 74,324 74,325 C80,325 86,323 89,322 M84,313 C84,318 83,325 81,331" fill="none" stroke="#e8262c" stroke-width="1.300"/>
    <path d="M53,349 C70,347 90,348 100,346 C108,346 112,350 112,353 C108,358 80,362 60,363 C40,363 25,362 16,360 C14,354 15,350 18,349 C30,350 40,350 53,349" fill="none" stroke="#e8262c" stroke-width="1.300"/>
    <text x="120" y="332" fill="#ef2126" font-size="12" font-weight="700" font-family="Noto Sans CJK SC, sans-serif">生成边界毛坯</text>
  </svg>
</div>
</body>
</html>
